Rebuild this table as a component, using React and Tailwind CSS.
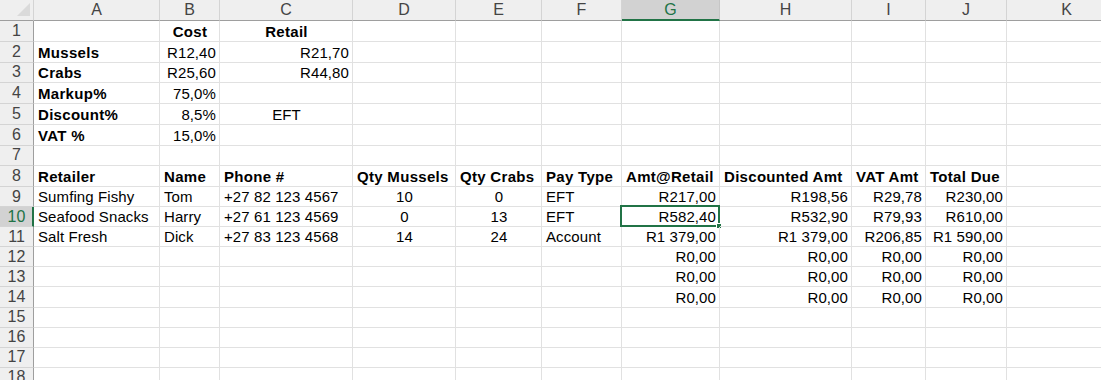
const COLS = [
  { key: "A", w: 126 },
  { key: "B", w: 60 },
  { key: "C", w: 133 },
  { key: "D", w: 103 },
  { key: "E", w: 86 },
  { key: "F", w: 80 },
  { key: "G", w: 98 },
  { key: "H", w: 132 },
  { key: "I", w: 74 },
  { key: "J", w: 81 },
  { key: "K", w: 120 },
];

// cell value: string (left), or { t, a, bold }
const b = (t, a = "l") => ({ t, a, bold: true });
const r = (t) => ({ t, a: "r" });
const c = (t) => ({ t, a: "c" });

const DATA = {
  1: { B: b("Cost", "c"), C: b("Retail", "c") },
  2: { A: b("Mussels"), B: r("R12,40"), C: r("R21,70") },
  3: { A: b("Crabs"), B: r("R25,60"), C: r("R44,80") },
  4: { A: b("Markup%"), B: r("75,0%") },
  5: { A: b("Discount%"), B: r("8,5%"), C: c("EFT") },
  6: { A: b("VAT %"), B: r("15,0%") },
  8: {
    A: b("Retailer"),
    B: b("Name"),
    C: b("Phone #"),
    D: b("Qty Mussels"),
    E: b("Qty Crabs"),
    F: b("Pay Type"),
    G: b("Amt@Retail"),
    H: b("Discounted Amt"),
    I: b("VAT Amt"),
    J: b("Total Due"),
  },
  9: {
    A: "Sumfing Fishy",
    B: "Tom",
    C: "+27 82 123 4567",
    D: c("10"),
    E: c("0"),
    F: "EFT",
    G: r("R217,00"),
    H: r("R198,56"),
    I: r("R29,78"),
    J: r("R230,00"),
  },
  10: {
    A: "Seafood Snacks",
    B: "Harry",
    C: "+27 61 123 4569",
    D: c("0"),
    E: c("13"),
    F: "EFT",
    G: r("R582,40"),
    H: r("R532,90"),
    I: r("R79,93"),
    J: r("R610,00"),
  },
  11: {
    A: "Salt Fresh",
    B: "Dick",
    C: "+27 83 123 4568",
    D: c("14"),
    E: c("24"),
    F: "Account",
    G: r("R1 379,00"),
    H: r("R1 379,00"),
    I: r("R206,85"),
    J: r("R1 590,00"),
  },
  12: { G: r("R0,00"), H: r("R0,00"), I: r("R0,00"), J: r("R0,00") },
  13: { G: r("R0,00"), H: r("R0,00"), I: r("R0,00"), J: r("R0,00") },
  14: { G: r("R0,00"), H: r("R0,00"), I: r("R0,00"), J: r("R0,00") },
};

const ROWS = Array.from({ length: 18 }, (_, i) => i + 1);

function Cell({ col, value, selected }) {
  const v = typeof value === "string" ? { t: value, a: "l" } : value;
  const justify =
    v?.a === "r" ? "justify-end" : v?.a === "c" ? "justify-center" : "justify-start";
  return (
    <div
      className={`relative flex shrink-0 items-end border-r border-b border-[#e1e1e1] pb-[1px] pl-[4px] pr-[3px] ${justify}`}
      style={{ width: col.w }}
    >
      {v && (
        <span
          className={`whitespace-nowrap leading-[17px] ${
            v.bold ? "font-bold tracking-[0.3px]" : "tracking-[0.1px]"
          }`}
        >
          {v.t}
        </span>
      )}
      {selected && (
        <div className="pointer-events-none absolute -top-[2px] -left-[2px] -right-[1px] -bottom-[1px] border-2 border-[#217346]">
          <div className="absolute -right-[4px] -bottom-[4px] h-[6px] w-[6px] border border-white bg-[#217346]" />
        </div>
      )}
    </div>
  );
}

export default function App() {
  return (
    <div
      className="h-[380px] w-[1101px] overflow-hidden bg-white text-[15px] text-black"
      style={{ fontFamily: '"Liberation Sans", Arial, sans-serif' }}
    >
      {/* column headers */}
      <div className="flex h-[21px]">
        <div className="relative w-[34px] shrink-0 border-r border-b border-r-[#d4d4d4] border-b-[#9e9e9e] bg-[#efefef]">
          <svg className="absolute right-[3px] bottom-[4px]" width="13" height="13" viewBox="0 0 13 13">
            <polygon points="13,0 13,13 0,13" fill="#dadada" />
          </svg>
        </div>
        {COLS.map((col) =>
          col.key === "G" ? (
            <div
              key={col.key}
              className="flex shrink-0 items-center justify-center border-r border-b-2 border-r-[#c6c6c6] border-b-[#217346] bg-[#d2d2d2] text-[16px] leading-none text-[#217346]"
              style={{ width: col.w }}
            >
              {col.key}
            </div>
          ) : (
            <div
              key={col.key}
              className="flex shrink-0 items-center justify-center border-r border-b border-r-[#d4d4d4] border-b-[#9e9e9e] bg-[#efefef] text-[16px] leading-none text-[#444444]"
              style={{ width: col.w }}
            >
              {col.key}
            </div>
          )
        )}
      </div>

      {ROWS.map((row) => {
        const sel = row === 10;
        return (
          <div key={row} className={`flex ${row <= 8 ? "h-[20.75px]" : "h-[20.1px]"}`}>
            <div
              className={`flex w-[34px] shrink-0 items-center justify-center border-b border-b-[#d4d4d4] text-[16px] leading-none ${
                sel
                  ? "border-r-2 border-r-[#217346] bg-[#d2d2d2] pl-[1px] text-[#217346]"
                  : "border-r border-r-[#9e9e9e] bg-[#efefef] text-[#444444]"
              }`}
            >
              {row}
            </div>
            {COLS.map((col) => (
              <Cell
                key={col.key}
                col={col}
                value={DATA[row]?.[col.key]}
                selected={sel && col.key === "G"}
              />
            ))}
          </div>
        );
      })}
    </div>
  );
}
